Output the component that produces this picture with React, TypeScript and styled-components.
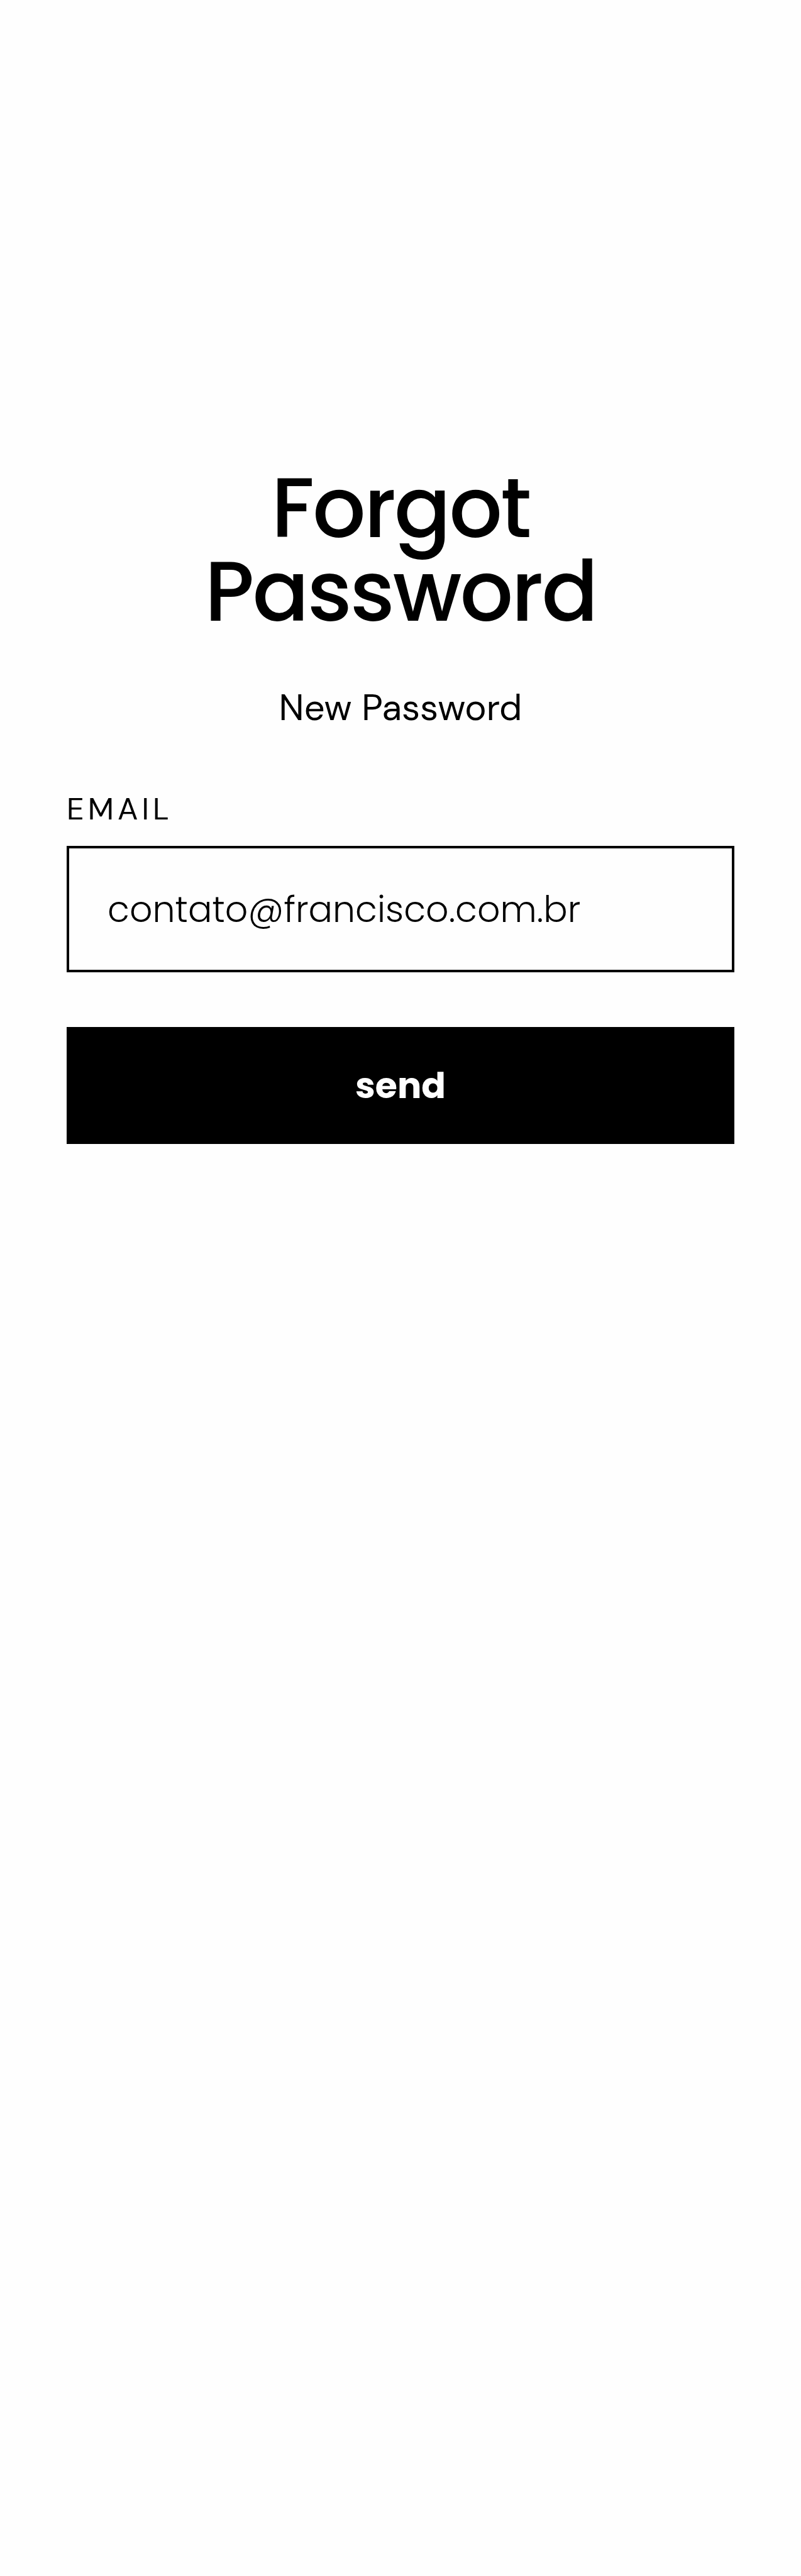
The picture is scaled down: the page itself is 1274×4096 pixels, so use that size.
import React, { useState } from "react";
import styled, { createGlobalStyle } from "styled-components";

const display = `Poppins, Inter, "Liberation Sans", sans-serif`;
const body = `"DM Sans", Inter, "Liberation Sans", sans-serif`;

const GlobalStyle = createGlobalStyle`
  *, *::before, *::after { box-sizing: border-box; }
  body { margin: 0; background: #fefefe; color: #000; }
`;

const Page = styled.main`
  min-height: 100vh;
  padding: 741px 106px 106px;
  background: #fefefe;
`;

const Title = styled.h1`
  margin: 0 0 85px;
  font: 500 133px/133px ${display};
  letter-spacing: -3px;
  text-align: center;
`;

const Subtitle = styled.p`
  margin: 0 0 100px;
  font: 400 58px/66px ${body};
  text-align: center;
`;

const Form = styled.form`
  display: flex;
  flex-direction: column;
  gap: 87px;
`;

const Field = styled.div`
  display: flex;
  flex-direction: column;
  gap: 30px;
`;

const Label = styled.label`
  font: 400 49px/57px ${body};
  letter-spacing: 6px;
  text-transform: uppercase;
`;

const Input = styled.input`
  width: 100%;
  height: 201px;
  padding: 0 61px;
  border: 4px solid #000;
  border-radius: 0;
  outline: none;
  background: transparent;
  color: #000;
  font: 300 57px/70px ${display};
`;

const Button = styled.button`
  width: 100%;
  height: 186px;
  padding: 0;
  border: 0;
  background: #000;
  color: #fefefe;
  font: 700 57px/70px ${display};
  cursor: pointer;
`;

export default function App() {
  const [email, setEmail] = useState("contato@francisco.com.br");
  return (
    <>
      <GlobalStyle />
      <Page>
        <Title>
          Forgot
          <br />
          Password
        </Title>
        <Subtitle>New Password</Subtitle>
        <Form onSubmit={(event) => event.preventDefault()}>
          <Field>
            <Label htmlFor="email">Email</Label>
            <Input
              id="email"
              type="email"
              value={email}
              onChange={(event) => setEmail(event.target.value)}
            />
          </Field>
          <Button type="submit">send</Button>
        </Form>
      </Page>
    </>
  );
}
